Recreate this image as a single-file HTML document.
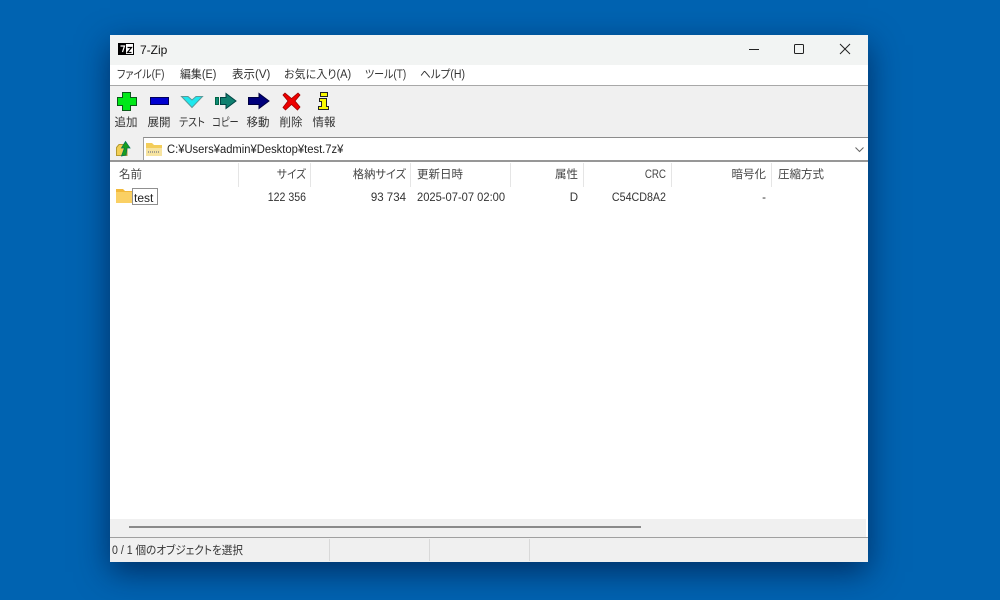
<!DOCTYPE html>
<html><head><meta charset="utf-8"><style>
html,body{margin:0;padding:0;width:1000px;height:600px;overflow:hidden;background:#0063b1}
body{position:relative;font-family:"Liberation Sans","Noto Sans CJK JP",sans-serif;font-size:12px;color:#222;font-feature-settings:"palt"}
.a{position:absolute;white-space:nowrap;line-height:16px;transform-origin:left center}
.r{text-align:right;transform-origin:right center}
.c{text-align:center;transform-origin:center center}
.b{position:absolute}
.m{font-size:11.5px;color:#333}
.h{font-size:11.5px;color:#444}
#shadow{position:absolute;left:110px;top:35px;width:758px;height:527px;box-shadow:0 10px 30px rgba(0,20,60,.65)}
#win{position:absolute;left:110px;top:35px;width:758px;height:527px;background:#fff;overflow:hidden}
</style></head><body>
<div id="shadow"></div>
<div id="win">
 <div class="b" style="left:0;top:0;width:758px;height:30px;background:#f2f4f3"></div>
 <div class="b" style="left:0;top:30px;width:758px;height:20px;background:#fff"></div>
 <div class="b" style="left:0;top:50px;width:758px;height:1px;background:#a8a8a8"></div>
 <div class="b" style="left:0;top:51px;width:758px;height:51px;background:#f0f0f0"></div>
 <div class="b" style="left:0;top:102px;width:758px;height:24px;background:#f0f0f0"></div>
 <div class="b" style="left:33px;top:102px;width:725px;height:23px;background:#fff;border-top:1px solid #8c8c8c;border-left:1px solid #a0a0a0;box-sizing:border-box"></div>
 <div class="b" style="left:0;top:125px;width:758px;height:2px;background:#979797"></div>
 <div class="b" style="left:0;top:484px;width:756px;height:18px;background:#f0f0f0"></div>
 <div class="b" style="left:19px;top:491px;width:512px;height:2px;background:#8a8a8a"></div>
 <div class="b" style="left:0;top:502px;width:758px;height:1px;background:#a0a0a0"></div>
 <div class="b" style="left:0;top:503px;width:758px;height:24px;background:#f0f0f0"></div>
 <div class="b" style="left:219px;top:504px;width:1px;height:22px;background:#d9d9d9"></div>
 <div class="b" style="left:319px;top:504px;width:1px;height:22px;background:#d9d9d9"></div>
 <div class="b" style="left:419px;top:504px;width:1px;height:22px;background:#d9d9d9"></div>
 <div class="b" style="left:128px;top:128px;width:1px;height:24px;background:#e5e5e5"></div>
 <div class="b" style="left:200px;top:128px;width:1px;height:24px;background:#e5e5e5"></div>
 <div class="b" style="left:300px;top:128px;width:1px;height:24px;background:#e5e5e5"></div>
 <div class="b" style="left:400px;top:128px;width:1px;height:24px;background:#e5e5e5"></div>
 <div class="b" style="left:473px;top:128px;width:1px;height:24px;background:#e5e5e5"></div>
 <div class="b" style="left:561px;top:128px;width:1px;height:24px;background:#e5e5e5"></div>
 <div class="b" style="left:661px;top:128px;width:1px;height:24px;background:#e5e5e5"></div>
</div>

<svg class="b" style="left:0;top:0" width="1000" height="600" viewBox="0 0 1000 600">
 <rect x="118.5" y="43.5" width="15" height="11" fill="#fff" stroke="#000"/>
 <rect x="119" y="44" width="7" height="10" fill="#000"/>
 <path d="M120.500 46H124.500L122.500 52" fill="none" stroke="#fff" stroke-width="1.2"/>
 <path d="M127.500 47.500H131.500L127.500 52.500H131.500" fill="none" stroke="#000" stroke-width="1.2"/>
 <rect x="749" y="49" width="10" height="1" fill="#222"/>
 <rect x="794.5" y="44.5" width="9" height="9" rx="1" fill="none" stroke="#222"/>
 <path d="M840 44L850 54M850 44L840 54" stroke="#222" stroke-width="1" fill="none"/>
 <path d="M122.500 92.500H130.500V97.500H136.500V105.500H130.500V110.500H122.500V105.500H117.500V97.500H122.500Z" fill="#00e818" stroke="#0a5a1a" stroke-width="1"/>
 <rect x="150.500" y="97.500" width="18" height="7" fill="#0000d0" stroke="#00005a"/>
 <path d="M181.500 96.500H188L192 100L196 96.500H202.500L192 107.500Z" fill="#1ee8ee" stroke="#5a9a9a"/>
 <rect x="215.500" y="97.500" width="3" height="7" fill="#0f8a78" stroke="#064"/>
 <path d="M220.500 97.500H226V93.500L236 101L226 108.500V104.500H220.500Z" fill="#0f8070" stroke="#044"/>
 <path d="M248.500 97.500H259V93.500L269 101L259 108.500V104.500H248.500Z" fill="#00007c" stroke="#000040"/>
 <path d="M285 93L291.500 98.500L298 93L300 95L295 101L300 107L297.500 110L291.500 104.500L285.500 110L283 107.500L288 101L283 95Z" fill="#ee0000" stroke="#900" stroke-width=".8"/>
 <path d="M320.500 92.500H327.500V96.500H320.500ZM319.500 98.500H326.500V106.500H328.500V109.500H318.500V106.500H321.500V101.500H319.500Z" fill="#f8f800" stroke="#222" stroke-width="1"/>
 <path d="M116.500 147.500L119 144.500H127V155.500H116.500Z" fill="#f2cf55" stroke="#b59a30"/>
 <path d="M121.500 156L124.500 148H121.500L125.500 141.500L130 148H127L126 155Z" fill="#1aa01a" stroke="#075" stroke-width=".8"/>
 <path d="M146 143H152L154 145H162V156H146Z" fill="#f3cd5a"/>
 <rect x="146" y="148" width="16" height="8" fill="#f7e4a0"/>
 <path d="M148 152H160" stroke="#888" stroke-width="1.500" stroke-dasharray="1 1"/>
 <path d="M855.500 147.500L859.500 151.500L863.500 147.500" fill="none" stroke="#666"/>
 <path d="M116 189H123L125 191H132V203H116Z" fill="#f2b93a"/>
 <rect x="116" y="192" width="16" height="11" fill="#fad064"/>
 <rect x="132.500" y="188.500" width="25" height="16" fill="none" stroke="#222" stroke-dasharray="1 1"/>
</svg>

<div class="a" style="left:140px;top:42px;color:#111">7-Zip</div>

<div class="a m" style="left:117px;top:67px;transform:scaleX(.87)">ファイル(F)</div>
<div class="a m" style="left:180px;top:67px;transform:scaleX(.95)">編集(E)</div>
<div class="a m" style="left:232px;top:67px">表示(V)</div>
<div class="a m" style="left:284px;top:67px;transform:scaleX(.96)">お気に入り(A)</div>
<div class="a m" style="left:365px;top:67px;transform:scaleX(.87)">ツール(T)</div>
<div class="a m" style="left:420px;top:67px;transform:scaleX(.92)">ヘルプ(H)</div>

<div class="a c m" style="left:110px;top:115px;width:32px">追加</div>
<div class="a c m" style="left:143px;top:115px;width:32px">展開</div>
<div class="a c m" style="left:176px;top:115px;width:32px;transform:scaleX(.87)">テスト</div>
<div class="a c m" style="left:209px;top:115px;width:32px;transform:scaleX(.8)">コピー</div>
<div class="a c m" style="left:242px;top:115px;width:32px">移動</div>
<div class="a c m" style="left:275px;top:115px;width:32px">削除</div>
<div class="a c m" style="left:308px;top:115px;width:32px">情報</div>

<div class="a" style="left:167px;top:142px;font-size:11.5px;color:#222;transform:scaleX(.975)">C:¥Users¥admin¥Desktop¥test.7z¥</div>

<div class="a h" style="left:119px;top:167px">名前</div>
<div class="a r h" style="left:240px;top:167px;width:66px;transform:scaleX(.93)">サイズ</div>
<div class="a r h" style="left:320px;top:167px;width:86px;transform:scaleX(.98)">格納サイズ</div>
<div class="a h" style="left:417px;top:167px">更新日時</div>
<div class="a r h" style="left:520px;top:167px;width:58px">属性</div>
<div class="a r h" style="left:600px;top:167px;width:66px;transform:scaleX(.85)">CRC</div>
<div class="a r h" style="left:680px;top:167px;width:86px">暗号化</div>
<div class="a h" style="left:778px;top:167px">圧縮方式</div>

<div class="a" style="left:134px;top:190px;color:#222">test</div>
<div class="a r m" style="left:240px;top:190px;width:66px;transform:scaleX(.92)">122 356</div>
<div class="a r m" style="left:320px;top:190px;width:86px">93 734</div>
<div class="a m" style="left:417px;top:190px;transform:scaleX(.97)">2025-07-07 02:00</div>
<div class="a r m" style="left:520px;top:190px;width:58px">D</div>
<div class="a r m" style="left:600px;top:190px;width:66px;transform:scaleX(.93)">C54CD8A2</div>
<div class="a r m" style="left:680px;top:190px;width:86px">-</div>

<div class="a m" style="left:112px;top:543px;transform:scaleX(.92)">0 / 1 個のオブジェクトを選択</div>
</body></html>
